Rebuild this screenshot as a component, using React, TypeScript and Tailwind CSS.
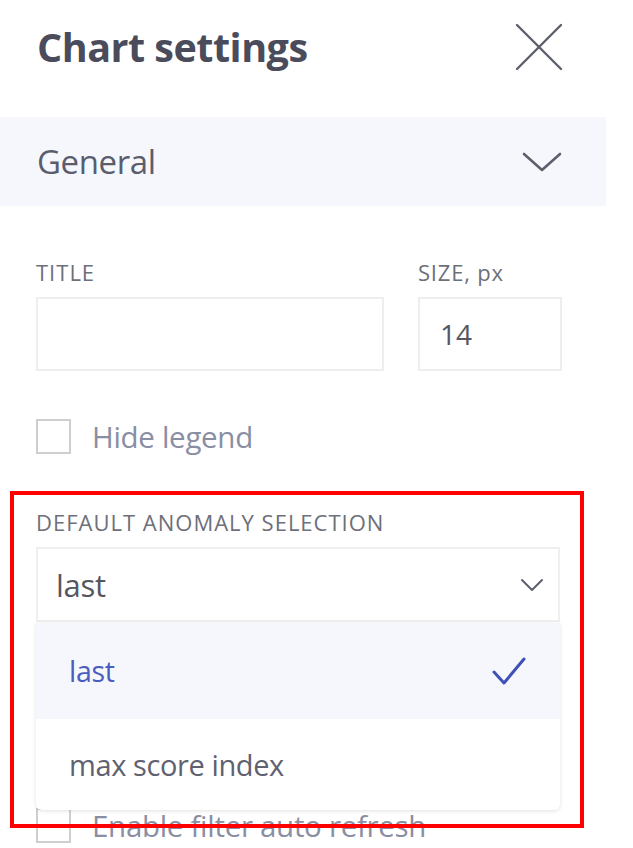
import React from "react";

export default function App() {
  return (
    <div className="relative w-[633px] h-[848px] overflow-hidden bg-white font-['Open_Sans',sans-serif]">
      {/* Header */}
      <div className="flex h-[117px] items-start justify-between pl-[37px] pr-[70px] pt-[21px]">
        <h1 className="text-[39.5px] font-bold leading-[52px] tracking-[-0.5px] text-[#4a4c5b]">Chart settings</h1>
        <svg width="48" height="48" viewBox="0 0 48 48" className="mt-[2px]">
          <line x1="2" y1="2" x2="46" y2="46" stroke="#5d606c" strokeWidth="2.4" strokeLinecap="round" />
          <line x1="46" y1="2" x2="2" y2="46" stroke="#5d606c" strokeWidth="2.4" strokeLinecap="round" />
        </svg>
      </div>

      {/* General band */}
      <div className="flex h-[89px] w-[606px] items-center justify-between bg-[#f6f7fd] pl-[37px] pr-[44px]">
        <span className="text-[33px] leading-[44px] tracking-[-0.4px] text-[#5a5d6c]">General</span>
        <svg width="40" height="22" viewBox="0 0 40 22">
          <polyline points="2,3 20,19 38,3" fill="none" stroke="#5d606c" strokeWidth="2.6" strokeLinecap="round" strokeLinejoin="round" />
        </svg>
      </div>

      {/* Form */}
      <div className="px-[36px] pt-[51px]">
        <div className="flex gap-[34px]">
          <div className="flex w-[348px] flex-col">
            <label className="text-[22px] leading-[30px] tracking-[1px] text-[#6d6f7a]">TITLE</label>
            <div className="mt-[10px] h-[74px] border-[2px] border-[#eeeeee] bg-white" />
          </div>
          <div className="flex w-[144px] flex-col">
            <label className="text-[22px] leading-[30px] tracking-[0.8px] text-[#6d6f7a]">SIZE, px</label>
            <div className="mt-[10px] flex h-[74px] items-center border-[2px] border-[#eeeeee] bg-white pl-[20px] text-[28px] text-[#555762]">14</div>
          </div>
        </div>

        <div className="mt-[48px] flex h-[35px] items-center gap-[21px]">
          <div className="h-[35px] w-[35px] shrink-0 border-[2px] border-[#cfcfcf] bg-white" />
          <span className="text-[29.5px] leading-[40px] tracking-[-0.3px] text-[#8a8ea3]">Hide legend</span>
        </div>

        <div className="mt-[53px]">
          <label className="block text-[22px] leading-[30px] tracking-[1px] text-[#6d6f7a]">DEFAULT ANOMALY SELECTION</label>
          <div className="mt-[10px] flex h-[75px] w-[524px] items-center justify-between border-[2px] border-[#efefef] bg-white pl-[18px] pr-[14px]">
            <span className="text-[31px] leading-[40px] tracking-[-0.3px] text-[#55575f]">last</span>
            <svg width="24" height="14" viewBox="0 0 24 14">
              <polyline points="2,2 12,12 22,2" fill="none" stroke="#5d606c" strokeWidth="2" strokeLinecap="round" strokeLinejoin="round" />
            </svg>
          </div>
        </div>

        <div className="mt-[186px] flex h-[35px] items-center gap-[21px]">
          <div className="h-[35px] w-[35px] shrink-0 border-[2px] border-[#cfcfcf] bg-white" />
          <span className="text-[29.5px] leading-[40px] tracking-[-0.3px] text-[#8a8ea3]">Enable filter auto refresh</span>
        </div>
      </div>

      {/* Dropdown menu */}
      <div className="absolute left-[36px] top-[623px] w-[524px] overflow-hidden rounded-b-[6px] bg-white shadow-[0_1px_4px_rgba(0,0,0,0.12)]">
        <div className="flex h-[96px] items-center justify-between bg-[#f6f7fd] pl-[33px] pr-[33px]">
          <span className="text-[28.5px] leading-[38px] tracking-[-0.3px] text-[#4b5cc0]">last</span>
          <svg width="36" height="32" viewBox="0 0 36 32">
            <polyline points="3,17 13,28 33,4" fill="none" stroke="#3f51b5" strokeWidth="3" strokeLinecap="round" strokeLinejoin="round" />
          </svg>
        </div>
        <div className="flex h-[91px] items-center pl-[33px]">
          <span className="text-[29px] leading-[38px] tracking-[-0.4px] text-[#5f6170]">max score index</span>
        </div>
      </div>

      {/* Red highlight */}
      <div className="pointer-events-none absolute left-[10px] top-[491px] h-[337px] w-[574px] border-[4px] border-[#ff0000]" />
    </div>
  );
}
